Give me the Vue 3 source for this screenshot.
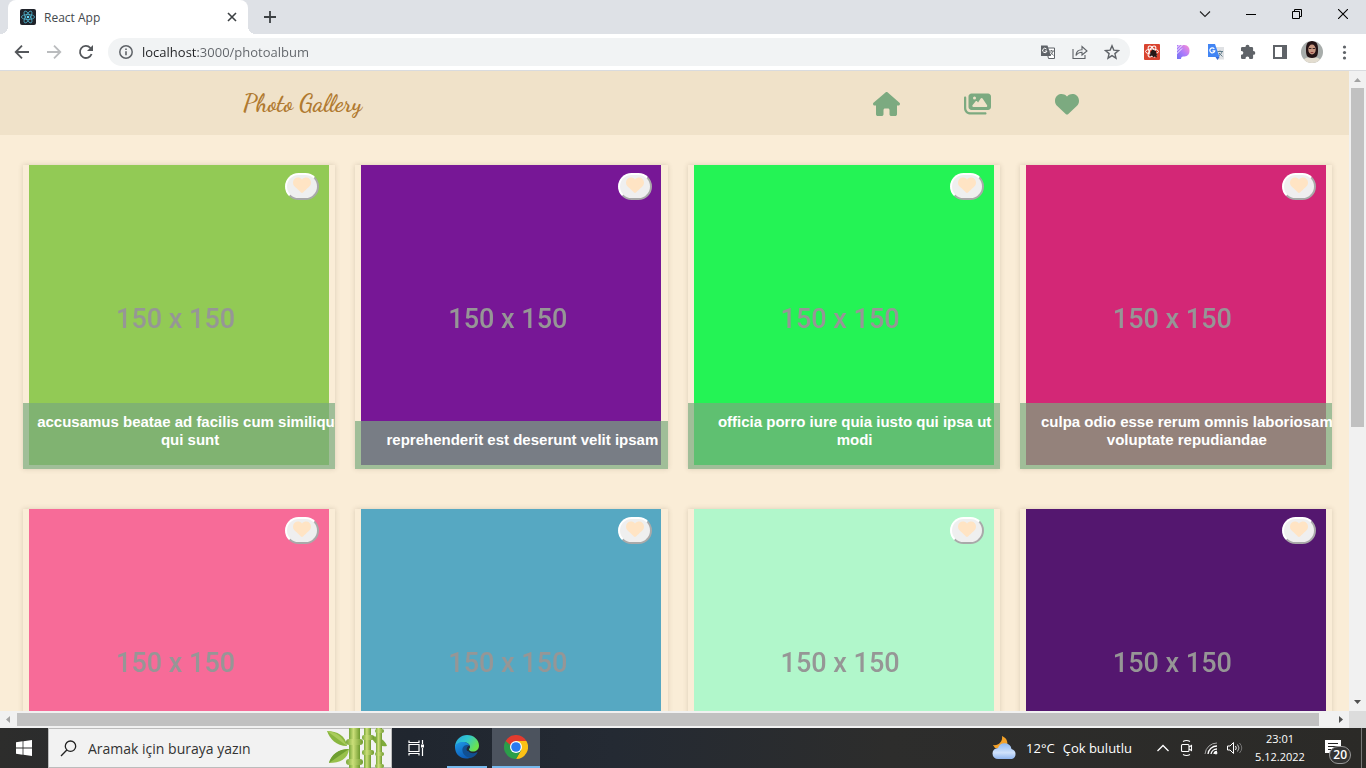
<script setup>
import { ref } from 'vue'

const address = ref('localhost:3000/photoalbum')
const query = ref('')

const photos = [
  { id: 1, color: '#92ca55', title: 'accusamus beatae ad facilis cum similique qui sunt' },
  { id: 2, color: '#771796', title: 'reprehenderit est deserunt velit ipsam' },
  { id: 3, color: '#24f355', title: 'officia porro iure quia iusto qui ipsa ut modi' },
  { id: 4, color: '#d32776', title: 'culpa odio esse rerum omnis laboriosam voluptate repudiandae' },
  { id: 5, color: '#f76b98' },
  { id: 6, color: '#56a8c2' },
  { id: 7, color: '#b1f7cb' },
  { id: 8, color: '#54176f' },
]

const heartPath =
  'M47.6 300.4L228.3 469.1c7.5 7 17.4 10.9 27.7 10.9s20.2-3.9 27.7-10.9L464.4 300.4c30.4-28.3 47.6-68 47.6-109.5v-5.8c0-69.9-50.5-129.5-119.4-141C347 36.5 300.6 51.4 268 84L256 96 244 84c-32.6-32.6-79-47.5-124.6-39.9C50.5 55.6 0 115.2 0 185.1v5.8c0 41.5 17.2 81.2 47.6 109.5z'
</script>

<template>
  <div class="screen">
    <div class="tabstrip">
      <div class="tab">
        <svg class="favicon" viewBox="0 0 16 16" width="16" height="16" aria-hidden="true">
          <rect width="16" height="16" rx="2" fill="#20232a" />
          <g fill="none" stroke="#4fb3cc" stroke-width="0.8">
            <ellipse cx="8" cy="8" rx="6.6" ry="2.5" />
            <ellipse cx="8" cy="8" rx="6.6" ry="2.5" transform="rotate(60 8 8)" />
            <ellipse cx="8" cy="8" rx="6.6" ry="2.5" transform="rotate(120 8 8)" />
          </g>
          <circle cx="8" cy="8" r="1.3" fill="#61dafb" />
        </svg>
        <span class="tab-title">React App</span>
        <button class="plain close-tab" aria-label="Close tab">
          <svg viewBox="0 0 10 10" width="10" height="10"><path d="M1 1l8 8M9 1l-8 8" stroke="#3c4043" stroke-width="1.6" /></svg>
        </button>
      </div>
      <button class="plain new-tab" aria-label="New tab">
        <svg viewBox="0 0 12 12" width="12" height="12"><path d="M6 0v12M0 6h12" stroke="#3c4043" stroke-width="1.8" /></svg>
      </button>
      <div class="window-controls">
        <button class="plain" aria-label="Search tabs"><svg viewBox="0 0 12 12" width="12" height="12"><path d="M1 3.5l5 5 5-5" fill="none" stroke="#222" stroke-width="1.1" /></svg></button>
        <button class="plain" aria-label="Minimize"><svg viewBox="0 0 10 10" width="10" height="10"><path d="M0 5.5h10" stroke="#000" /></svg></button>
        <button class="plain" aria-label="Restore"><svg viewBox="0 0 10 10" width="10" height="10"><path d="M.5 2.5h7v7h-7zM2.5 2.5v-2h7v7h-2" fill="none" stroke="#000" /></svg></button>
        <button class="plain" aria-label="Close"><svg viewBox="0 0 10 10" width="10" height="10"><path d="M0 0l10 10M10 0L0 10" stroke="#000" stroke-width="1.1" /></svg></button>
      </div>
    </div>

    <div class="toolbar">
      <button class="plain tool" aria-label="Back"><svg viewBox="0 0 16 16" width="16" height="16"><path d="M15 8H2M8 1.7L1.7 8 8 14.3" fill="none" stroke="#54575b" stroke-width="1.8" /></svg></button>
      <button class="plain tool" aria-label="Forward"><svg viewBox="0 0 16 16" width="16" height="16"><path d="M1 8h13M8 1.7L14.300 8 8 14.3" fill="none" stroke="#babcbe" stroke-width="1.8" /></svg></button>
      <button class="plain tool" aria-label="Reload"><svg viewBox="0 0 16 16" width="16" height="16"><path d="M13.600 10A6 6 0 1 1 12.300 3.800L13.500 5" fill="none" stroke="#54575b" stroke-width="1.8" /><path d="M15 1v6H9z" fill="#54575b" /></svg></button>
      <div class="omnibox">
        <svg viewBox="0 0 16 16" width="16" height="16" aria-hidden="true"><circle cx="8" cy="8" r="6.200" fill="none" stroke="#5f6368" stroke-width="1.5" /><path d="M8 7.200v4M8 4.500v1.600" stroke="#5f6368" stroke-width="1.600" /></svg>
        <input v-model="address" class="address" type="text" aria-label="Address" spellcheck="false" />
        <button class="plain tool" aria-label="Translate this page">
          <svg viewBox="0 0 16 16" width="16" height="16">
            <path d="M6 4h8.500v10.500H8.500z" fill="#fff" stroke="#5f6368" />
            <path d="M1 1.500h6.500L11 12H1z" fill="#5f6368" />
            <path d="M6.500 5A2.200 2.200 0 1 0 7 7H4.800" fill="none" stroke="#fff" />
            <path d="M9 7h5M11.500 6v1M13 7c-.4 2-1.500 3-3 4M10.500 8l3 3.500" fill="none" stroke="#5f6368" stroke-width=".9" />
          </svg>
        </button>
        <button class="plain tool" aria-label="Share">
          <svg viewBox="0 0 16 16" width="16" height="16" fill="none" stroke="#5f6368" stroke-width="1.100"><path d="M1 5v9.500h12V11" /><path d="M4 11.500c.2-4 2.500-5.800 6-5.800V2.500L15 7l-5 4V8.200c-2.500 0-4.500.8-6 3.300z" /></svg>
        </button>
        <button class="plain tool" aria-label="Bookmark this tab">
          <svg viewBox="0 0 16 16" width="16" height="16"><path d="M8 1.800l1.800 4.300 4.700.4-3.600 3.100 1.100 4.600L8 11.700l-4 2.500 1.100-4.600-3.600-3.100 4.700-.4z" fill="none" stroke="#5f6368" stroke-width="1.400" /></svg>
        </button>
      </div>
      <button class="plain tool" aria-label="React Developer Tools">
        <svg viewBox="0 0 16 16" width="16" height="16">
          <rect width="16" height="16" rx="1" fill="#d9432f" />
          <g fill="none" stroke="#fff" stroke-width="1"><ellipse cx="8" cy="7.500" rx="6.500" ry="2.500" /><ellipse cx="8" cy="7.500" rx="6" ry="2.500" transform="rotate(60 8 7.500)" /><ellipse cx="8" cy="7.500" rx="6" ry="2.500" transform="rotate(120 8 7.500)" /></g>
          <path d="M6.500 8l2-2.500 3.500 1.500v2l1.500 1-1 1 .5 2.500-2.500-1-1 1-1.500-2-2 1v-1.500z" fill="#241716" />
        </svg>
      </button>
      <button class="plain tool" aria-label="Color extension">
        <svg viewBox="0 0 16 16" width="16" height="16">
          <defs><linearGradient id="petal" x1="0" y1="1" x2="1" y2="0"><stop offset="0" stop-color="#6d72f5" /><stop offset=".5" stop-color="#b17cfa" /><stop offset="1" stop-color="#ff8fd0" /></linearGradient></defs>
          <path d="M1 1h7.500a5.800 5.800 0 0 1 0 11.500c-2.500 0-3.500.5-3.500 2.500H1z" fill="url(#petal)" />
          <path d="M0 4.500L4.500 0M0 7.500L7.500 0M0 10.500l6-6" stroke="#fff" stroke-width=".9" />
        </svg>
      </button>
      <button class="plain tool" aria-label="Google Translate">
        <svg viewBox="0 0 16 16" width="16" height="16">
          <path d="M7 3h9v12.500H9.500z" fill="#dfe1e4" />
          <path d="M0 0h7l4.500 13H0z" fill="#4285f4" /><path d="M7.500 13h4L9.500 16z" fill="#3367d6" />
          <path d="M6.300 4.800a2.500 2.500 0 1 0 .5 2H4.500" fill="none" stroke="#fff" stroke-width="1.200" />
          <path d="M9.500 7.500h5.500M12 6.500v1M14 7.500c-.5 2-1.500 3-3 4M11 9l3.500 3.500" fill="none" stroke="#607d8b" />
        </svg>
      </button>
      <button class="plain tool" aria-label="Extensions">
        <svg viewBox="0 0 16 16" width="16" height="16"><path d="M1 4.300q0-1.300 1.300-1.300H5.500v-.3a2 2 0 0 1 4 0V3h2.300q1.300 0 1.300 1.300V7h.3a1.900 1.900 0 0 1 0 3.800h-.3v3q0 1.200-1.300 1.200H9.300v-.5a1.900 1.900 0 0 0-3.800 0v.5H2.300Q1 15 1 13.800V10.700h.5a1.800 1.800 0 0 0 0-3.700H1z" fill="#5f6368" /></svg>
      </button>
      <button class="plain tool" aria-label="Side panel">
        <svg viewBox="0 0 16 16" width="16" height="16"><path d="M2 2h12v12H2z" fill="#fff" stroke="#5f6368" stroke-width="2" /><path d="M10 2h4v12h-4z" fill="#5f6368" /></svg>
      </button>
      <button class="plain tool" aria-label="Profile">
        <svg viewBox="0 0 22 22" width="22" height="22">
          <defs><clipPath id="face"><circle cx="11" cy="11" r="11" /></clipPath></defs>
          <g clip-path="url(#face)">
            <rect width="22" height="22" fill="#a8adab" />
            <path d="M1 22c1-4 4-6 10-6s9 2 10 6z" fill="#e3ddd0" />
            <path d="M11 0c-5 0-6 4-6 8 0 5 0 9 6 9s6-4 6-9c0-4-1-8-6-8z" fill="#241315" />
            <ellipse cx="11" cy="8.500" rx="3.700" ry="5" fill="#c79680" />
            <path d="M8 7.500h2.400M11.700 7.500H14" stroke="#3a2522" stroke-width="1" /><path d="M9.700 11.500h2.600" stroke="#8d3c3c" />
          </g>
        </svg>
      </button>
      <button class="plain tool" aria-label="Menu">
        <svg viewBox="0 0 16 16" width="16" height="16" fill="#5f6368"><circle cx="8.500" cy="3" r="1.600" /><circle cx="8.500" cy="8.500" r="1.600" /><circle cx="8.500" cy="14" r="1.600" /></svg>
      </button>
    </div>

    <div class="viewport">
      <div class="page">
        <header class="navbar">
          <a href="#" class="brand">Photo Gallery</a>
          <nav>
            <a href="#" aria-label="Home"><svg viewBox="0 0 576 512" width="27" height="24"><path d="M575.8 255.5c0 18-15 32.1-32 32.1h-32l.7 160.2c0 2.700-.2 5.400-.5 8.100V472c0 22.100-17.900 40-40 40H456c-1.100 0-2.200 0-3.300-.1c-1.400 .1-2.800 .1-4.200 .1H416 392c-22.100 0-40-17.900-40-40V448 384c0-17.700-14.300-32-32-32H256c-17.700 0-32 14.300-32 32v64 24c0 22.100-17.900 40-40 40H160 128.100c-1.500 0-3-.1-4.500-.2c-1.200 .1-2.400 .2-3.600 .2H104c-22.100 0-40-17.900-40-40V360c0-.9 0-1.900 .1-2.800V287.600H32c-18 0-32-14-32-32.100c0-9 3-17 10-24L266.400 8c7-7 15-8 22-8s15 2 21 7L564.800 231.500c8 7 12 15 11 24z" /></svg></a>
            <a href="#" aria-label="Photo album"><svg viewBox="0 0 576 512" width="27" height="24"><path d="M160 32c-35.300 0-64 28.700-64 64V320c0 35.300 28.700 64 64 64H512c35.300 0 64-28.700 64-64V96c0-35.300-28.700-64-64-64H160zM396 138.700l96 144c4.900 7.400 5.400 16.800 1.200 24.600S480.900 320 472 320H328 280 200c-9.200 0-17.600-5.300-21.600-13.600s-2.900-18.200 2.900-25.400l64-80c4.600-5.700 11.400-9 18.700-9s14.200 3.300 18.700 9l17.300 21.600 56-84C360.500 132 368 128 376 128s15.500 4 20 10.700zM192 128a32 32 0 1 1 64 0 32 32 0 1 1 -64 0zM48 120c0-13.300-10.700-24-24-24S0 106.700 0 120V344c0 75.100 60.900 136 136 136H456c13.300 0 24-10.700 24-24s-10.700-24-24-24H136c-48.600 0-88-39.400-88-88V120z" /></svg></a>
            <a href="#" aria-label="Favorites"><svg viewBox="0 0 512 512" width="24" height="24"><path :d="heartPath" /></svg></a>
          </nav>
        </header>
        <main class="gallery">
          <figure v-for="photo in photos" :key="photo.id" class="card">
            <div class="photo" :style="{ backgroundColor: photo.color }"><span>150 x 150</span></div>
            <button class="like" aria-label="Add to favorites">
              <svg viewBox="0 0 512 512" width="18" height="18"><path :d="heartPath" fill="#ffe4c4" /></svg>
            </button>
            <figcaption v-if="photo.title">{{ photo.title }}</figcaption>
          </figure>
        </main>
      </div>
      <div class="scroll vertical">
        <svg viewBox="0 0 17 17" width="17" height="17"><path d="M5 11h7L8.500 7z" fill="#a3a3a3" /></svg>
        <div class="track"><div class="thumb"></div></div>
        <svg viewBox="0 0 17 17" width="17" height="17"><path d="M5 6h7l-3.500 4z" fill="#505050" /></svg>
      </div>
      <div class="scroll horizontal">
        <svg viewBox="0 0 17 17" width="17" height="17"><path d="M10 5v7L6 8.500z" fill="#a3a3a3" /></svg>
        <div class="track"><div class="thumb"></div></div>
        <svg viewBox="0 0 17 17" width="17" height="17"><path d="M7 5v7l4-3.500z" fill="#505050" /></svg>
      </div>
      <div class="corner"></div>
    </div>

    <footer class="taskbar">
      <button class="plain start" aria-label="Start">
        <svg viewBox="0 0 16 16" width="16" height="16" fill="#fff"><path d="M0 2.200l6.600-.9v6.300H0zM7.400 1.200L16 0v7.600H7.400zM0 8.400h6.600v6.300L0 13.800zM7.400 8.400H16V16l-8.600-1.200z" /></svg>
      </button>
      <div class="search">
        <svg viewBox="0 0 17 17" width="17" height="17" fill="none" stroke="#222" stroke-width="1.300" aria-hidden="true"><circle cx="10.500" cy="6.200" r="5.200" /><path d="M6.800 10L1 16" /></svg>
        <input v-model="query" type="text" aria-label="Ara" placeholder="Aramak için buraya yazın" />
        <svg class="bamboo" viewBox="0 0 62 40" width="62" height="40" aria-hidden="true">
          <defs><linearGradient id="stem"><stop offset="0" stop-color="#78a63a" /><stop offset=".4" stop-color="#cbdf79" /><stop offset="1" stop-color="#6e9a2e" /></linearGradient></defs>
          <path d="M0 3c10 0 19 5 20 15C9 18 3 11 0 3z" fill="#89b63f" /><path d="M0 3l20 15C15 9 10 4 0 3z" fill="#a9cc5c" />
          <path d="M2 35c2-8 10-14 20-14-1 10-9 14-20 14z" fill="#98c14c" /><path d="M2 35l20-14C11 21 4 27 2 35z" fill="#6f9f31" />
          <path d="M44 8c8 0 14 4 16 10-8 1-13-2-16-10z" fill="#7eab3a" />
          <g fill="url(#stem)">
            <path d="M22 0h11v12H22zM22 16h11v15H22zM22 35h11v5H22z" /><rect x="19" y="11" width="17" height="6" rx="3" /><rect x="19" y="31" width="17" height="6" rx="3" />
            <path d="M37 0h7v40h-7z" /><rect x="35" y="7" width="12" height="5" rx="2" /><rect x="35" y="22" width="12" height="5" rx="2" />
            <path d="M49 0h6v40h-6z" /><rect x="48" y="1" width="9" height="4" rx="2" /><rect x="48" y="24" width="9" height="4" rx="2" /><rect x="48" y="36" width="9" height="4" rx="2" />
          </g>
        </svg>
      </div>
      <div class="apps">
        <button class="plain" aria-label="Task view"><svg viewBox="0 0 17 16" width="17" height="16" fill="none" stroke="#fff" stroke-width="1.200"><path d="M1 4.500h10v7H1zM1 .5v2h10v-2M1 15.500v-2h10v2M14.500 0v4M14.500 8v8" /><path d="M13 4.500h3v3h-3z" fill="#fff" stroke="none" /></svg></button>
        <button class="plain running edge" aria-label="Microsoft Edge">
          <svg viewBox="0 0 24 24" width="24" height="24">
            <defs>
              <linearGradient id="edge-top" x1="0" y1="0" x2="1" y2=".5"><stop offset="0" stop-color="#2aa5dd" /><stop offset=".5" stop-color="#31c7cf" /><stop offset="1" stop-color="#6be34d" /></linearGradient>
              <linearGradient id="edge-low" x1="0" y1="0" x2=".5" y2="1"><stop offset="0" stop-color="#1f9ae6" /><stop offset="1" stop-color="#0c5cb8" /></linearGradient>
            </defs>
            <path d="M0 11C1 4 6 0 12 0c7 0 12 5 12 10.500 0 4-3 6-6 6-3.500 0-4.500-1.500-4-2.700.7-1 .8-1.700.8-2.300 0-2-2-4-5.300-4C5 7.500 1.500 10 0 14z" fill="url(#edge-top)" />
            <path d="M0 12c0-3 4-5 8-5s6.800 2.200 6.800 4.800C13 9 8.500 11 8 15c0 4 4 7 8.500 7C10 26 0 22 0 12z" fill="url(#edge-low)" />
            <path d="M12.500 10c-4 0-5.500 3-5 6 .7 4 4.500 7 9 6.800 3-1 5-3.300 6-5 .2-.5-.2-.8-.8-.5-3 1.600-6.500 1-8-.8-1.500-1.700-1.200-2.700-.2-3.700.7-1 .5-2.500-1-2.800z" fill="#114f91" />
            <path d="M14.500 10.500c.8 1.500.2 2.500-.4 3.300-.5.700-.3 1.500.7 2.200h-2.500c-1.500-2-.3-4.500 2.200-5.500z" fill="#232a35" />
          </svg>
        </button>
        <button class="plain running active" aria-label="Google Chrome">
          <svg viewBox="0 0 24 24" width="24" height="24">
            <path d="M12 12L1.600 6A12 12 0 0 1 22.400 6z" fill="#e33b2e" />
            <path d="M12 12V6h10.400A12 12 0 0 1 12 24l5.200-9z" fill="#fbc116" />
            <path d="M12 12l5.200 3L12 24A12 12 0 0 1 1.600 6l5.200 9z" fill="#2b9e4a" />
            <path d="M1.600 6l5.200 9L12 6z" fill="#2b9e4a" /><path d="M1.600 6H12v4l-5.200 2z" fill="#e33b2e" /><path d="M1.600 6l5.200 9 2-3z" fill="#2b9e4a" />
            <circle cx="12" cy="12" r="6" fill="#fff" /><circle cx="12" cy="12" r="4.800" fill="#2a7af0" />
          </svg>
        </button>
      </div>
      <button class="plain weather">
        <svg viewBox="0 0 26 24" width="26" height="24" aria-hidden="true">
          <defs><linearGradient id="cloud" x1="0" y1="0" x2="0" y2="1"><stop offset="0" stop-color="#8eb9f2" /><stop offset=".6" stop-color="#cfe1fb" /><stop offset="1" stop-color="#8fb5ef" /></linearGradient></defs>
          <path d="M10 0c5 2 7 7 4 12H3L1 9c5 1 10-3 9-9z" fill="#f4a229" />
          <path d="M6 23a5.500 5.500 0 0 1 0-11 7 7 0 0 1 13.500 1A5.200 5.200 0 0 1 20 23z" fill="url(#cloud)" />
        </svg>
        <span>12°C</span><span>Çok bulutlu</span>
      </button>
      <div class="tray">
        <button class="plain" aria-label="Show hidden icons"><svg viewBox="0 0 14 14" width="14" height="14"><path d="M1.500 10L7 4.500l5.500 5.500" fill="none" stroke="#fff" stroke-width="1.300" /></svg></button>
        <button class="plain" aria-label="Meet now"><svg viewBox="0 0 16 18" width="16" height="18" fill="none" stroke="#fff" stroke-width="1.100"><rect x="2.500" y="5.500" width="7.500" height="7" rx="1" /><path d="M10 8l2.500-1.500v5L10 10M4 2.500q3.500-2 7 0M4 15.500q3.500 2 7 0" /></svg></button>
        <button class="plain" aria-label="Network"><svg viewBox="0 0 14 14" width="14" height="14" fill="none" stroke="#fff"><path d="M1 13A12 12 0 0 1 13 2" stroke="#aaa" /><path d="M4 13a9 9 0 0 1 9-8M7 13a6 6 0 0 1 6-5M10 13a3 3 0 0 1 3-2.500" stroke-width="1.300" /><circle cx="12" cy="12" r="1" fill="#fff" /></svg></button>
        <button class="plain" aria-label="Volume"><svg viewBox="0 0 18 14" width="18" height="14" fill="none" stroke="#fff"><path d="M1.500 5h2.500l3.500-3.500v11L4 9H1.500zM9.500 5q1.500 2 0 4" /><path d="M11.500 3.500q3 3.500 0 7" stroke="#bbb" /><path d="M13.500 2q4.500 5 0 10" stroke="#777" /></svg></button>
      </div>
      <button class="plain clock"><span>23:01</span><span>5.12.2022</span></button>
      <button class="plain notices" aria-label="Notifications">
        <svg viewBox="0 0 16 16" width="16" height="16"><path d="M0 0h16v13H7v3l-3-3H0z" fill="#fff" /><path d="M3 3.500h10M3 6.500h10M3 9.500h7" stroke="#222" /></svg>
        <span class="badge">20</span>
      </button>
      <div class="desktop-edge"></div>
    </footer>
  </div>
</template>

<style>
body {
  overflow: hidden;
}
</style>

<style scoped>
.screen {
  display: flex;
  flex-direction: column;
  height: 100vh;
  overflow: hidden;
  font-family: "Segoe UI", "Open Sans", "Noto Sans", sans-serif;
}
.screen * {
  box-sizing: border-box;
}
svg {
  display: block;
  flex: none;
}
.plain {
  display: flex;
  align-items: center;
  justify-content: center;
  padding: 0;
  border: 0;
  background: none;
  color: inherit;
  font: inherit;
}
input {
  min-width: 0;
  padding: 0;
  border: 0;
  outline: 0;
  background: none;
  font: inherit;
}

/* Browser chrome */
.tabstrip {
  display: flex;
  flex: none;
  height: 34px;
  padding-left: 8px;
  background: #dee1e6;
}
.tab {
  position: relative;
  display: flex;
  align-items: center;
  width: 240px;
  padding: 0 10px 0 12px;
  border-radius: 8px 8px 0 0;
  background: #fff;
  color: #45494d;
  font-size: 12px;
}
.tab::before,
.tab::after {
  content: "";
  position: absolute;
  bottom: 0;
  width: 8px;
  height: 8px;
}
.tab::before {
  right: 100%;
  background: radial-gradient(circle at 0 0, transparent 8px, #fff 8px);
}
.tab::after {
  left: 100%;
  background: radial-gradient(circle at 100% 0, transparent 8px, #fff 8px);
}
.tab-title {
  flex: 1;
  margin-left: 8px;
}
.close-tab {
  width: 12px;
  height: 16px;
}
.new-tab {
  width: 28px;
  margin-left: 8px;
}
.window-controls {
  display: flex;
  height: 28px;
  margin-left: auto;
}
.window-controls button {
  width: 46px;
}
.toolbar {
  display: flex;
  flex: none;
  align-items: center;
  height: 37px;
  padding: 0 6px;
  border-bottom: 1px solid #d9dbdf;
  background: #fff;
}
.tool {
  flex: none;
  width: 32px;
  height: 28px;
}
.omnibox {
  display: flex;
  flex: 1;
  align-items: center;
  height: 28px;
  margin: 0 6px;
  padding: 0 2px 0 10px;
  border-radius: 14px;
  background: #f1f3f4;
}
.address {
  flex: 1;
  height: 24px;
  margin-left: 8px;
  background: linear-gradient(90deg, #202124 56px, #5f6368 56px);
  background-clip: text;
  -webkit-text-fill-color: transparent;
  font-size: 13px;
}

/* Page */
.viewport {
  display: grid;
  flex: 1;
  grid-template-columns: minmax(0, 1fr) 17px;
  grid-template-rows: minmax(0, 1fr) 17px;
  min-height: 0;
}
.page {
  overflow: hidden;
  background: #faedd7;
}
.navbar {
  display: flex;
  align-items: center;
  justify-content: space-between;
  height: 64px;
  padding: 0 20% 0 18%;
  background: #f0e2c9;
}
.brand {
  color: #b07a30;
  font: bold 24px "Dancing Script", cursive;
  text-decoration: none;
}
nav {
  display: flex;
  gap: 64px;
  padding-top: 2px;
}
nav svg {
  fill: #7caa80;
}
.gallery {
  display: grid;
  grid-template-columns: repeat(4, minmax(0, 1fr));
  gap: 40px 20px;
  padding: 30px 17px 30px 23px;
}
.card {
  position: relative;
  height: 304px;
  margin: 0;
  overflow: hidden;
  box-shadow: 0 0 5px rgba(90, 75, 50, 0.2);
}
.photo {
  display: flex;
  align-items: center;
  justify-content: center;
  width: 300px;
  height: 300px;
  margin: 0 auto;
  color: #969696;
  font: 500 27px Roboto, "Liberation Sans", sans-serif;
}
.photo span {
  margin: 7px 7px 0 0;
  filter: blur(0.6px);
}
.like {
  position: absolute;
  top: 8px;
  right: 16px;
  display: flex;
  align-items: flex-start;
  justify-content: center;
  width: 34px;
  height: 27px;
  padding: 1px 0 0;
  border: 2px solid;
  border-color: #fff #a9a9a9 #a9a9a9 #fff;
  border-radius: 14px;
  background: #efefef;
}
figcaption {
  position: absolute;
  bottom: 0;
  left: 0;
  box-sizing: content-box !important;
  width: 100%;
  padding: 10px 11px 20px;
  background: rgba(121, 170, 125, 0.7);
  color: #fff;
  font: bold 15px/18px "Liberation Sans", Arial, sans-serif;
  text-align: center;
}
.scroll {
  display: flex;
  background: #f1f1f1;
}
.vertical {
  flex-direction: column;
}
.track {
  flex: 1;
}
.thumb {
  background: #c1c1c1;
}
.vertical .thumb {
  height: 56%;
  margin: 0 2px;
}
.horizontal .track {
  padding: 2px 0;
}
.horizontal .thumb {
  width: 99%;
  height: 100%;
}
.corner {
  background: #dcdcdc;
}

/* Taskbar */
.taskbar {
  display: flex;
  flex: none;
  height: 40px;
  background: linear-gradient(90deg, #2d2d2c, #20262f 30%, #242a33 45%, #2d2d2c 65%, #2b2a27);
  color: #fff;
}
.start {
  width: 48px;
}
.search {
  display: flex;
  align-items: center;
  width: 344px;
  padding-left: 11px;
  border: 1px solid #bcbcbc;
  background: #f2f2f2;
}
.search input {
  flex: 1;
  margin-left: 11px;
  font-size: 14px;
}
.search input::placeholder {
  color: #333;
  opacity: 1;
}
.bamboo {
  margin-right: 2px;
}
.apps {
  display: flex;
}
.apps button {
  width: 48px;
}
.apps .running {
  border-bottom: 2px solid #76b9ed;
}
.apps .edge {
  width: 40px;
  margin: 0 5px 0 7px;
}
.apps .active {
  background: #4c535e;
}
.weather {
  gap: 8px;
  margin-left: auto;
  font-size: 13px;
}
.tray {
  display: flex;
  margin-left: 19px;
}
.tray button {
  width: 24px;
}
.clock {
  flex-direction: column;
  width: 66px;
  font-size: 11px;
  line-height: 18px;
}
.notices {
  position: relative;
  justify-content: flex-start;
  width: 48px;
  padding-left: 12px;
}
.badge {
  position: absolute;
  right: 10px;
  bottom: 4px;
  padding: 0 3px;
  border: 1px solid #999;
  border-radius: 9px;
  background: #333;
  font-size: 12px;
  font-weight: 600;
  line-height: 16px;
}
.desktop-edge {
  width: 5px;
  border-left: 1px solid #777;
}
</style>
